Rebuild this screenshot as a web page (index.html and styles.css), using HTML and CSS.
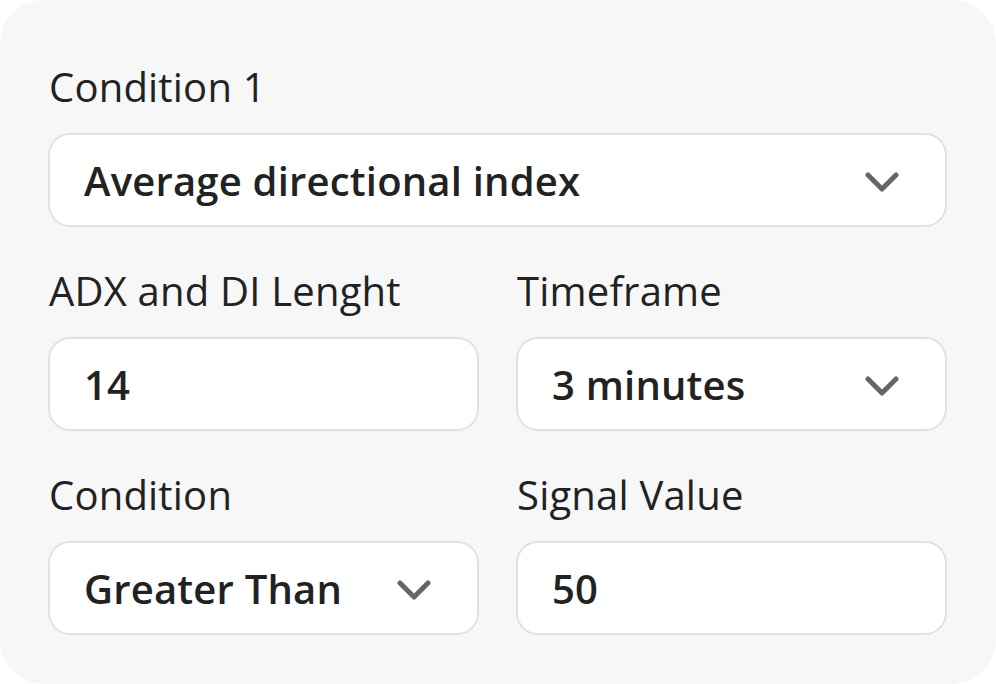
FILE: index.html
```html
<!DOCTYPE html>
<html lang="en">
<head>
<meta charset="utf-8">
<title>Condition</title>
<link rel="stylesheet" href="styles.css">
</head>
<body>
<div class="card">
  <div class="field full">
    <div class="label">Condition 1</div>
    <div class="box select">
      <span class="value">Average directional index</span>
      <svg class="chev" width="34" height="21" viewBox="0 0 34 21"><polyline points="3,3 17,17 31,3" /></svg>
    </div>
  </div>
  <div class="field">
    <div class="label">ADX and DI Lenght</div>
    <div class="box"><span class="value">14</span></div>
  </div>
  <div class="field">
    <div class="label">Timeframe</div>
    <div class="box select">
      <span class="value">3 minutes</span>
      <svg class="chev" width="34" height="21" viewBox="0 0 34 21"><polyline points="3,3 17,17 31,3" /></svg>
    </div>
  </div>
  <div class="field">
    <div class="label">Condition</div>
    <div class="box select">
      <span class="value">Greater Than</span>
      <svg class="chev" width="34" height="21" viewBox="0 0 34 21"><polyline points="3,3 17,17 31,3" /></svg>
    </div>
  </div>
  <div class="field">
    <div class="label">Signal Value</div>
    <div class="box"><span class="value">50</span></div>
  </div>
</div>
</body>
</html>
```
FILE: styles.css
```css
html, body {
  margin: 0;
  padding: 0;
  background: #ffffff;
}
body {
  font-family: "Open Sans", "Noto Sans", sans-serif;
  color: #222222;
}
.card {
  box-sizing: border-box;
  width: 996px;
  height: 684px;
  background: #f7f7f7;
  border-radius: 44px;
  padding: 67px 49px 0 48px;
  display: grid;
  grid-template-columns: 1fr 1fr;
  column-gap: 37px;
  row-gap: 44px;
  align-content: start;
}
.field {
  display: flex;
  flex-direction: column;
}
.full {
  grid-column: 1 / -1;
}
.label {
  font-size: 40px;
  line-height: 40px;
  font-weight: 400;
  letter-spacing: 0.2px;
  color: #222222;
  margin-bottom: 26px;
  padding-left: 1px;
}
.box {
  box-sizing: border-box;
  height: 94px;
  background: #ffffff;
  border: 2px solid #e1e1e1;
  border-radius: 22px;
  display: flex;
  align-items: center;
  justify-content: space-between;
  padding: 0 46px 0 34px;
}
.value {
  font-size: 40px;
  font-weight: 600;
  line-height: 40px;
  letter-spacing: 0.2px;
  color: #222222;
  padding-top: 1px;
}
.chev {
  display: block;
  margin-top: 4px;
}
.chev polyline {
  fill: none;
  stroke: #666666;
  stroke-width: 5;
  stroke-linecap: round;
  stroke-linejoin: round;
}
```
